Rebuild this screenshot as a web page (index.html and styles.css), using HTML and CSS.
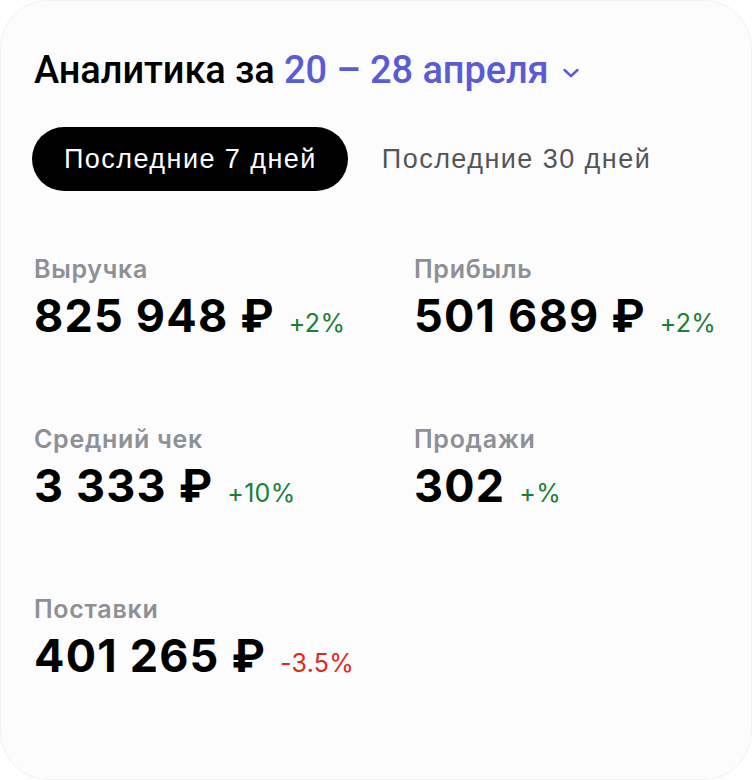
FILE: index.html
```html
<!DOCTYPE html>
<html lang="ru">
<head>
<meta charset="utf-8">
<link rel="stylesheet" href="styles.css">
</head>
<body>
<div class="card">
  <h1 class="title">Аналитика за <span class="range">20 – 28 апреля</span>
    <svg class="chev" width="20" height="14" viewBox="0 0 20 14"><path d="M3.5 4 L10 10 L16.5 4" fill="none" stroke="#5b5bd6" stroke-width="2.4" stroke-linecap="round" stroke-linejoin="round"/></svg>
  </h1>
  <div class="tabs">
    <div class="tab active">Последние 7 дней</div>
    <div class="tab">Последние 30 дней</div>
  </div>
  <div class="grid">
    <div class="metric">
      <div class="label">Выручка</div>
      <div class="value">825 948 ₽<span class="delta up">+2%</span></div>
    </div>
    <div class="metric">
      <div class="label">Прибыль</div>
      <div class="value">501 689 ₽<span class="delta up">+2%</span></div>
    </div>
    <div class="metric">
      <div class="label">Средний чек</div>
      <div class="value">3 333 ₽<span class="delta up">+10%</span></div>
    </div>
    <div class="metric">
      <div class="label">Продажи</div>
      <div class="value">302<span class="delta up">+%</span></div>
    </div>
    <div class="metric">
      <div class="label">Поставки</div>
      <div class="value">401 265 ₽<span class="delta down">-3.5%</span></div>
    </div>
  </div>
</div>
</body>
</html>
```

FILE: styles.css
```css
html, body {
  margin: 0;
  padding: 0;
  background: #ffffff;
}
.card {
  box-sizing: border-box;
  width: 752px;
  height: 780px;
  border-radius: 48px;
  border: 1px solid #f1f1f3;
  background: #fcfcfd;
  padding: 44px 0 0 33px;
  font-family: "Inter", "Noto Sans", sans-serif;
}
.title {
  margin: 0;
  font-family: "Roboto", sans-serif;
  font-weight: 500;
  font-size: 38px;
  letter-spacing: -0.1px;
  line-height: 50px;
  color: #000;
  display: flex;
  align-items: center;
  white-space: pre;
}
.range {
  color: #5b5bd6;
}
.chev {
  margin-left: 12px;
  margin-top: 6px;
}
.tabs {
  display: flex;
  align-items: center;
  gap: 34px;
  margin-top: 32px;
  margin-left: -2px;
}
.tab {
  font-family: "Liberation Sans", Arial, sans-serif;
  font-size: 27px;
  letter-spacing: 1.45px;
  color: #555558;
  height: 64px;
  line-height: 64px;
}
.tab.active {
  background: #000;
  color: #fff;
  border-radius: 32px;
  padding: 0 31px 0 32px;
}
.grid {
  display: grid;
  grid-template-columns: 380px 1fr;
  row-gap: 73px;
  margin-top: 62px;
}
.label {
  font-size: 25px;
  font-weight: 600;
  letter-spacing: 0.7px;
  color: #8d9096;
  line-height: 32px;
}
.value {
  font-size: 45px;
  font-weight: 700;
  letter-spacing: 1.2px;
  color: #000;
  line-height: 54px;
  margin-top: 4px;
  display: flex;
  align-items: baseline;
}
.delta {
  font-size: 25px;
  font-weight: 400;
  letter-spacing: 0.3px;
  margin-left: 14px;
}
.up { color: #1a7f37; }
.down { color: #e0281b; }
```
